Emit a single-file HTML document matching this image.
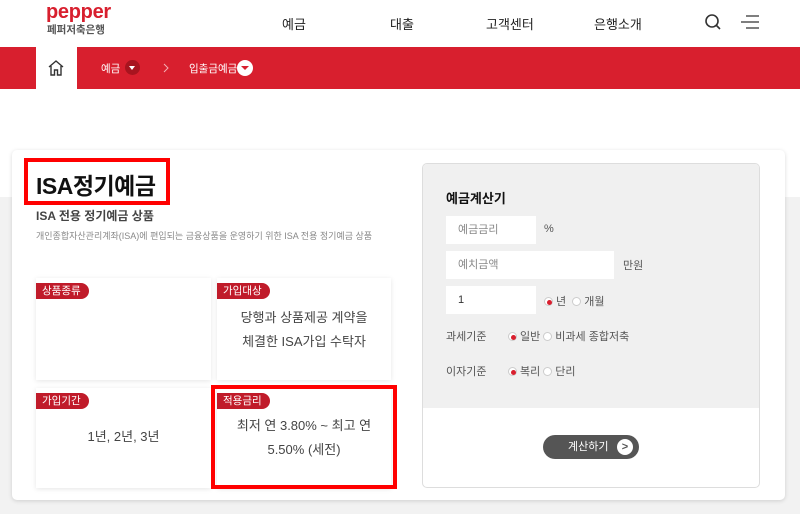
<!DOCTYPE html>
<html><head><meta charset="utf-8"><style>
*{margin:0;padding:0;box-sizing:border-box}
body{width:800px;height:514px;overflow:hidden;background:#fff;font-family:"Liberation Sans","Noto Sans CJK KR",sans-serif;position:relative;color:#333}
.abs{position:absolute}
.gray{left:0;top:197px;width:800px;height:317px;background:#f2f2f2}
.nav{font-size:13px;color:#222;top:14px}
.red{left:0;top:47px;width:800px;height:42px;background:#d81f2e}
.home{left:36px;top:47px;width:41px;height:42px;background:#fff}
.card{left:12px;top:150px;width:773px;height:350px;background:#fff;border-radius:5px;box-shadow:0 1px 4px rgba(0,0,0,.15)}
.cell{background:#fff;box-shadow:0 1px 5px rgba(0,0,0,.1);text-align:center;font-size:13px;color:#444;line-height:24px}
.tag{position:absolute;left:0;top:5px;background:#c01b2a;color:#fff;font-size:10.5px;height:16px;line-height:16px;padding:0 8px 0 6px;border-radius:0 8px 8px 0}
.inp{background:#fff;font-size:11px;color:#888;padding-left:12px;line-height:28px;height:28px}
.lbl{font-size:11px;color:#555}
.rd{display:inline-block;width:9px;height:9px;border-radius:50%;border:1px solid #ccc;background:#fff;vertical-align:-1px;margin-right:3px;position:relative}
.rd.on::after{content:"";position:absolute;left:1.5px;top:1.5px;width:5px;height:5px;border-radius:50%;background:#d81f2e}
</style></head><body>
<div class="abs gray"></div>
<div class="abs" style="left:46px;top:1px;font-size:20px;font-weight:bold;color:#d81f2e;letter-spacing:-0.3px">pepper</div>
<div class="abs" style="left:47px;top:22px;font-size:10.5px;font-weight:bold;color:#555">페퍼저축은행</div>
<div class="abs nav" style="left:282px">예금</div>
<div class="abs nav" style="left:390px">대출</div>
<div class="abs nav" style="left:486px">고객센터</div>
<div class="abs nav" style="left:594px">은행소개</div>
<svg class="abs" style="left:704px;top:13px" width="18" height="18" viewBox="0 0 18 18"><circle cx="8" cy="8" r="6" fill="none" stroke="#333" stroke-width="1.6"/><path d="M12.5 12.5L16 16" stroke="#333" stroke-width="1.6"/></svg>
<svg class="abs" style="left:740px;top:14px" width="20" height="16" viewBox="0 0 20 16"><path d="M6 2H19M1 8H19M6 14H19" stroke="#333" stroke-width="1.3"/></svg>
<div class="abs red"></div>
<div class="abs home"><svg style="position:absolute;left:11px;top:12px" width="18" height="18" viewBox="0 0 18 18"><path d="M2 8L9 2L16 8M4 7V16H7.5V11H10.5V16H14V7" fill="none" stroke="#333" stroke-width="1.4"/></svg></div>
<div class="abs" style="left:101px;top:61px;font-size:10.5px;color:#fff">예금</div>
<div class="abs" style="left:125px;top:60px;width:15px;height:15px;border-radius:50%;background:#a8141f"><div style="position:absolute;left:4px;top:6px;border:3.5px solid transparent;border-top:4px solid #fff;border-bottom:0"></div></div>
<svg class="abs" style="left:162px;top:63px" width="8" height="10" viewBox="0 0 8 10"><path d="M2 1L6 5L2 9" fill="none" stroke="#f3b0b5" stroke-width="1"/></svg>
<div class="abs" style="left:189px;top:61px;font-size:10.5px;color:#fff">입출금예금</div>
<div class="abs" style="left:237px;top:60px;width:16px;height:16px;border-radius:50%;background:#fff"><div style="position:absolute;left:4px;top:6px;border:4px solid transparent;border-top:4.5px solid #d81f2e;border-bottom:0"></div></div>
<div class="abs card"></div>
<div class="abs" style="left:24px;top:158px;width:146px;height:47px;border:4px solid #f00"></div>
<div class="abs" style="left:36px;top:167px;font-size:23px;font-weight:bold;color:#111;letter-spacing:-0.5px">ISA정기예금</div>
<div class="abs" style="left:36px;top:207px;font-size:12px;font-weight:bold;color:#444">ISA 전용 정기예금 상품</div>
<div class="abs" style="left:36px;top:229px;font-size:9px;color:#888">개인종합자산관리계좌(ISA)에 편입되는 금융상품을 운영하기 위한 ISA 전용 정기예금 상품</div>
<div class="abs cell" style="left:36px;top:278px;width:175px;height:102px"><span class="tag">상품종류</span></div>
<div class="abs cell" style="left:217px;top:278px;width:174px;height:102px;padding-top:28px"><span class="tag">가입대상</span>당행과 상품제공 계약을<br>체결한 ISA가입 수탁자</div>
<div class="abs cell" style="left:36px;top:388px;width:175px;height:100px;padding-top:37px"><span class="tag">가입기간</span>1년, 2년, 3년</div>
<div class="abs cell" style="left:217px;top:388px;width:174px;height:100px;padding-top:26px"><span class="tag">적용금리</span>최저 연 3.80% ~ 최고 연<br>5.50% (세전)</div>
<div class="abs" style="left:211px;top:385px;width:186px;height:104px;border:4px solid #f00"></div>
<div class="abs" style="left:422px;top:163px;width:338px;height:325px;border:1px solid #ddd;border-radius:5px;background:#fff;overflow:hidden"><div style="height:244px;background:#f0f0f0"></div></div>
<div class="abs" style="left:446px;top:188px;font-size:13px;font-weight:bold;color:#111">예금계산기</div>
<div class="abs inp" style="left:446px;top:216px;width:90px">예금금리</div>
<div class="abs lbl" style="left:544px;top:223px">%</div>
<div class="abs inp" style="left:446px;top:251px;width:168px">예치금액</div>
<div class="abs lbl" style="left:623px;top:257px">만원</div>
<div class="abs inp" style="left:446px;top:286px;width:90px;color:#333">1</div>
<div class="abs lbl" style="left:544px;top:293px"><span class="rd on"></span>년 &nbsp;<span class="rd"></span>개월</div>
<div class="abs lbl" style="left:446px;top:328px">과세기준</div>
<div class="abs lbl" style="left:508px;top:328px"><span class="rd on"></span>일반 <span class="rd"></span>비과세 종합저축</div>
<div class="abs lbl" style="left:446px;top:363px">이자기준</div>
<div class="abs lbl" style="left:508px;top:363px"><span class="rd on"></span>복리 <span class="rd"></span>단리</div>
<div class="abs" style="left:543px;top:435px;width:96px;height:24px;border-radius:12px;background:#555;color:#fff;font-size:11px;line-height:24px;padding-left:25px">계산하기<span style="position:absolute;left:74px;top:4px;width:16px;height:16px;border-radius:50%;background:#fff;color:#555;font-size:11px;line-height:16px;text-align:center;font-weight:bold">&gt;</span></div>
</body></html>
